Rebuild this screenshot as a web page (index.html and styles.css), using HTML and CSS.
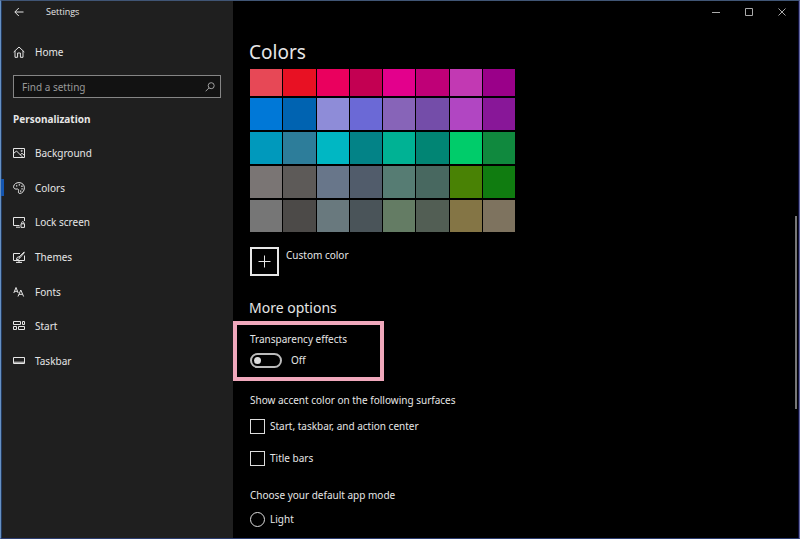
FILE: index.html
```html
<!DOCTYPE html>
<html lang="en">
<head>
<meta charset="utf-8">
<title>Settings</title>
<link rel="stylesheet" href="styles.css">
</head>
<body>
<div class="window">
  <aside class="sidebar">
    <header class="title">
      <button class="back" type="button" aria-label="Back"><svg width="10" height="10" viewBox="0 0 10 10"><path d="M9.5 5H1M4.8 1L.8 5l4 4"/></svg></button>
      <span>Settings</span>
    </header>
    <a class="nav-link home" href="#"><svg class="icon" viewBox="0 0 12 12"><path d="M.7 6L6 1l5.3 5M2 5v6.3h2.600V7h2.800v4.300H10V5"/></svg>Home</a>
    <form class="search" role="search">
      <input type="search" aria-label="Find a setting" placeholder="Find a setting">
      <button type="submit" aria-label="Search"><svg width="10" height="10" viewBox="0 0 10 10"><circle cx="6.200" cy="3.700" r="3"/><path d="M4 5.900L.6 9.300"/></svg></button>
    </form>
    <h2 class="group">Personalization</h2>
    <nav class="nav">
      <a class="nav-link" href="#"><svg class="icon" viewBox="0 0 12 12"><path d="M.5 1.500h11v9H.5zM.5 6.500L3.500 4l6.500 6.500M7.300 7.700L9 6.300l2.500 2.200"/><circle cx="8.700" cy="3.900" r=".6"/></svg>Background</a>
      <a class="nav-link current" href="#" aria-current="page"><svg class="icon" viewBox="0 0 12 12"><path d="M.6 4.300C1.200 2 3.300.6 6 .6c3.200 0 5.400 2.300 5.400 5.200 0 3.200-2.300 5.600-4.500 5.600-1.500 0-1.800-1-1.400-2.200.4-1.300-.1-2.500-1.400-2.200C2.600 7.400.2 6.800.6 4.300z"/><path class="dots" d="M3 3.200h1.300v1.300H3zM5.700 2.200H7v1.300H5.700zM8.300 3.600h1.300v1.300H8.300zM8.400 6.300h1.300v1.300H8.400zM7 8.500h1.300v1.300H7z"/></svg>Colors</a>
      <a class="nav-link" href="#"><svg class="icon" viewBox="0 0 12 12"><path d="M11.500 5V1.500H.5v8h6M3 11.200h4M8 7.800h3.500v3.600H8zM8.700 7.800V6.600c0-1.300 2.100-1.300 2.100 0v1.200"/></svg>Lock screen</a>
      <a class="nav-link" href="#"><svg class="icon" viewBox="0 0 12 12"><path d="M7 2.500H.5v7h11v-5M3 11.400h6M6 9.500v2M11.300.8L6 6.100M11.600 1.400L6.800 6.900M3 8.200c1.200-.2.700-2.300 2.300-2.300 1.600.1 1.600 2.300-.2 2.500-.8.100-1.500.1-2.100-.2z"/></svg>Themes</a>
      <a class="nav-link" href="#"><svg class="icon" viewBox="0 0 12 12"><path d="M.8 7L3 1.500 5.200 7M1.500 5.300h3M5 10.500l2.800-6.500 2.800 6.500M6 8.300h3.600"/></svg>Fonts</a>
      <a class="nav-link" href="#"><svg class="icon" viewBox="0 0 12 12"><path d="M.5 1.500h7v3h-7zM9.500 1.500h2v3h-2zM.5 6.500h3v3h-3zM5.500 6.500h6v3h-6z"/></svg>Start</a>
      <a class="nav-link" href="#"><svg class="icon" viewBox="0 0 12 12"><path d="M.5 2.500h11v6H.5zM.5 7.200h11"/></svg>Taskbar</a>
    </nav>
  </aside>

  <main class="main">
    <div class="controls">
      <button type="button" aria-label="Minimize"><svg width="8" height="8" viewBox="0 0 8 8"><path d="M0 4.500h8"/></svg></button>
      <button type="button" aria-label="Maximize"><svg width="8" height="8" viewBox="0 0 8 8"><path d="M.5.5h7v7h-7z"/></svg></button>
      <button type="button" aria-label="Close"><svg width="8" height="8" viewBox="0 0 8 8"><path d="M.5.5l7 7M7.500.5l-7 7"/></svg></button>
    </div>
    <div class="content">
      <h1>Colors</h1>
      <div class="swatches">
        <button type="button" aria-label="Color 1" style="background:#e74856"></button><button type="button" aria-label="Color 2" style="background:#e81123"></button><button type="button" aria-label="Color 3" style="background:#ea005e"></button><button type="button" aria-label="Color 4" style="background:#c30052"></button><button type="button" aria-label="Color 5" style="background:#e3008c"></button><button type="button" aria-label="Color 6" style="background:#bf0077"></button><button type="button" aria-label="Color 7" style="background:#c239b3"></button><button type="button" aria-label="Color 8" style="background:#9a0089"></button>
        <button type="button" aria-label="Color 9" style="background:#0078d7"></button><button type="button" aria-label="Color 10" style="background:#0063b1"></button><button type="button" aria-label="Color 11" style="background:#8e8cd8"></button><button type="button" aria-label="Color 12" style="background:#6b69d6"></button><button type="button" aria-label="Color 13" style="background:#8764b8"></button><button type="button" aria-label="Color 14" style="background:#744da9"></button><button type="button" aria-label="Color 15" style="background:#b146c2"></button><button type="button" aria-label="Color 16" style="background:#881798"></button>
        <button type="button" aria-label="Color 17" style="background:#0099bc"></button><button type="button" aria-label="Color 18" style="background:#2d7d9a"></button><button type="button" aria-label="Color 19" style="background:#00b7c3"></button><button type="button" aria-label="Color 20" style="background:#038387"></button><button type="button" aria-label="Color 21" style="background:#00b294"></button><button type="button" aria-label="Color 22" style="background:#018574"></button><button type="button" aria-label="Color 23" style="background:#00cc6a"></button><button type="button" aria-label="Color 24" style="background:#10893e"></button>
        <button type="button" aria-label="Color 25" style="background:#7a7574"></button><button type="button" aria-label="Color 26" style="background:#5d5a58"></button><button type="button" aria-label="Color 27" style="background:#68768a"></button><button type="button" aria-label="Color 28" style="background:#515c6b"></button><button type="button" aria-label="Color 29" style="background:#567c73"></button><button type="button" aria-label="Color 30" style="background:#486860"></button><button type="button" aria-label="Color 31" style="background:#498205"></button><button type="button" aria-label="Color 32" style="background:#107c10"></button>
        <button type="button" aria-label="Color 33" style="background:#767676"></button><button type="button" aria-label="Color 34" style="background:#4c4a48"></button><button type="button" aria-label="Color 35" style="background:#69797e"></button><button type="button" aria-label="Color 36" style="background:#4a5459"></button><button type="button" aria-label="Color 37" style="background:#647c64"></button><button type="button" aria-label="Color 38" style="background:#525e54"></button><button type="button" aria-label="Color 39" style="background:#847545"></button><button type="button" aria-label="Color 40" style="background:#7e735f"></button>
      </div>
      <div class="custom">
        <button type="button" id="custom" aria-label="Custom color"><svg width="13" height="13" viewBox="0 0 13 13"><path d="M.5 6.500h12M6.500.5v12"/></svg></button>
        <label for="custom">Custom color</label>
      </div>
      <h2 class="section">More options</h2>
      <section class="highlight">
        <label for="transparency">Transparency effects</label>
        <div class="toggle-row"><input class="toggle" id="transparency" type="checkbox" role="switch"><span>Off</span></div>
      </section>
      <fieldset class="surfaces">
        <legend>Show accent color on the following surfaces</legend>
        <label class="option"><input type="checkbox">Start, taskbar, and action center</label>
        <label class="option"><input type="checkbox">Title bars</label>
      </fieldset>
      <fieldset class="modes">
        <legend>Choose your default app mode</legend>
        <label class="option"><input type="radio" name="mode">Light</label>
      </fieldset>
    </div>
    <div class="scrollbar"></div>
  </main>
</div>
</body>
</html>
```
FILE: styles.css
```css
* { box-sizing: border-box; }

body {
  margin: 0;
  background: #000;
  color: #e6e6e6;
  font: 10px/16px "Noto Sans", "Open Sans", sans-serif;
}

button, input { font: inherit; color: inherit; }
button { padding: 0; border: 0; background: none; display: grid; place-items: center; }
svg { fill: none; stroke: currentColor; stroke-width: 1; display: block; }
h1, h2 { margin: 0; font-weight: 400; }

.window {
  display: flex;
  height: 100vh;
  overflow: hidden;
  border-top: 1px solid #405575;
  border-right: 1px solid #6266a0;
  border-bottom: 1px solid #2b3c70;
  border-left: 1px solid #6690c2;
}

.sidebar {
  flex: 0 0 232px;
  background: #1f1f1f;
  border-left: 1px solid #20395f;
}

.title {
  display: flex;
  align-items: center;
  gap: 22px;
  height: 22px;
  padding-left: 12px;
  font: 9px/16px "Open Sans", sans-serif;
}

.nav-link {
  position: relative;
  display: flex;
  align-items: center;
  gap: 10px;
  padding-left: 11px;
  color: inherit;
  text-decoration: none;
}

.icon { width: 12px; height: 12px; }
.dots { fill: currentColor; stroke: none; }
.home { height: 22px; margin: 18px 0 12px; }

.search {
  display: flex;
  height: 23px;
  margin: 0 12px 0 11px;
  padding-right: 5px;
  border: 1px solid #858585;
  background: #121212;
  color: #a0a0a0;
}
.search input {
  flex: 1;
  min-width: 0;
  padding: 0 8px;
  border: 0;
  outline: 0;
  background: none;
  appearance: none;
}
.search input::placeholder { color: #999; opacity: 1; }

.group { margin: 13px 11px 9px; font-size: 10px; line-height: 16px; font-weight: 700; }
.nav { display: grid; grid-auto-rows: 1fr; height: 242px; }

.current::before {
  content: "";
  position: absolute;
  left: -2px;
  width: 4px;
  height: 17px;
  background: #1456b0;
}

.main { position: relative; flex: 1; min-width: 0; border-right: 1px solid #10103c; }

.controls { display: flex; justify-content: flex-end; height: 22px; color: #aaa; }
.controls button { width: 33px; }

.content { padding: 0 17px; }
.content h1 { margin: 16px 0 4px -1px; font-size: 19px; line-height: 26px; }

.swatches {
  display: grid;
  grid-template-columns: repeat(8, 1fr);
  grid-template-rows: 27px repeat(4, 32px);
  gap: 2px 1px;
  width: 265px;
}

.custom { display: flex; gap: 7px; margin-top: 15px; }
.custom button { width: 29px; height: 29px; border: 2px solid #e6e6e6; }

.content .section { margin: 20px 0 1px -1px; font-size: 14px; line-height: 24px; }

.highlight {
  width: 151px;
  height: 60px;
  margin-left: -17px;
  padding: 6px 13px;
  border: 4px solid #f0a8bc;
}
.toggle-row { display: flex; align-items: center; gap: 9px; margin-top: 5px; }
.toggle {
  appearance: none;
  display: flex;
  align-items: center;
  width: 32px;
  height: 15px;
  margin: 0;
  padding-left: 2px;
  border: 2px solid #bbb;
  border-radius: 8px;
}
.toggle::before { content: ""; width: 7px; height: 7px; border-radius: 50%; background: #ddd; }

fieldset { min-width: 0; margin: 0; padding: 0; border: 0; }
legend { padding: 0; }
.surfaces { margin-top: 11px; }
.modes { margin-top: 21px; }
.option { display: flex; align-items: center; gap: 5px; height: 16px; margin-top: 16px; }
.surfaces .option:first-of-type { margin-top: 10px; }
.modes .option { margin-top: 8px; }
.option input {
  appearance: none;
  width: 15px;
  height: 15px;
  margin: 0;
  border: 1px solid #ddd;
}
.option input[type="radio"] { border-radius: 50%; }

.scrollbar {
  position: absolute;
  top: 40%;
  right: 1px;
  width: 2px;
  height: 36%;
  background: #777;
}
```
